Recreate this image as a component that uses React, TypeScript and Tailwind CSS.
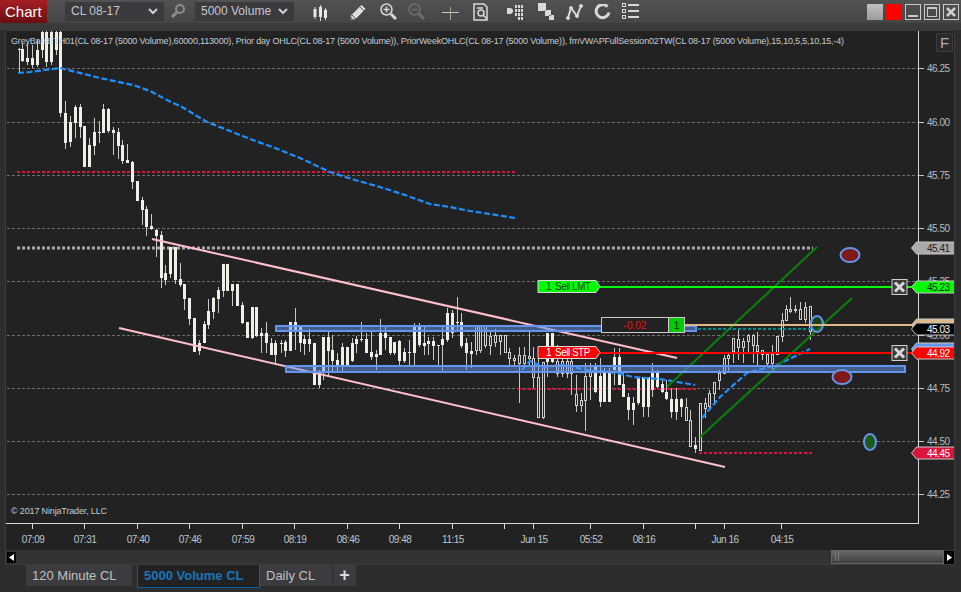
import React from 'react';

// candle rows: [x, wickTop, bodyTop, bodyBottom, wickBottom, hollow], measured at 3x, see toPx
type Row = number[];

const topLeft: Row[] = [
  [56, 145, 148, 150, 220], [67, 130, 148, 182, 185], [82, 130, 175, 187, 195], [97, 135, 175, 195, 205],
  [112, 120, 150, 195, 200], [125, 93, 95, 150, 175], [139, 93, 95, 185, 200], [154, 93, 95, 185, 195],
  [168, 93, 95, 150, 165], [181, 93, 95, 339, 351],
];

const slide: Row[] = [
  [196, 183, 220, 310, 328], [211, 228, 247, 305, 320], [226, 195, 200, 248, 293], [241, 193, 202, 260, 293],
  [253, 257, 257, 380, 380], [268, 295, 316, 380, 380], [283, 235, 277, 317, 345], [298, 243, 277, 278, 310],
  [310, 193, 207, 278, 278], [325, 205, 207, 272, 280], [340, 262, 270, 278, 345], [355, 265, 277, 317, 357],
  [367, 300, 316, 362, 373], [382, 312, 361, 368, 368], [397, 363, 366, 425, 447], [412, 423, 423, 482, 482],
  [427, 472, 481, 509, 555], [439, 498, 508, 560, 587], [454, 522, 559, 566, 570], [469, 568, 570, 587, 650],
  [484, 573, 585, 713, 745], [496, 675, 700, 720, 735], [511, 620, 622, 702, 713], [526, 620, 622, 720, 733],
  [541, 670, 717, 735, 740], [553, 733, 733, 776, 810], [568, 775, 775, 836, 855], [583, 835, 835, 937, 937],
  [598, 900, 910, 932, 945], [613, 843, 852, 910, 910], [625, 778, 813, 855, 867], [640, 770, 773, 815, 837],
  [655, 740, 750, 776, 820], [670, 672, 672, 752, 770], [682, 672, 672, 752, 752], [697, 732, 732, 752, 798],
  [712, 732, 732, 798, 798],
];

const middle: Row[] = [
  [7, 37, 45, 98, 103], [22, 97, 97, 145, 145], [35, 52, 52, 145, 148], [49, 52, 52, 137, 140],
  [64, 115, 128, 137, 190], [79, 95, 128, 160, 190], [92, 145, 160, 195, 195], [106, 150, 160, 195, 220],
  [122, 150, 160, 161, 190], [136, 150, 157, 182, 200], [149, 95, 95, 182, 182], [164, 55, 95, 120, 180],
  [179, 110, 110, 160, 185], [193, 135, 147, 162, 195], [208, 118, 148, 162, 185], [221, 160, 160, 285, 285],
  [236, 240, 250, 285, 295], [250, 140, 140, 245, 270], [265, 125, 140, 182, 260], [277, 135, 180, 212, 245],
  [292, 190, 210, 225, 250], [307, 160, 170, 228, 250], [322, 170, 170, 225, 228], [335, 145, 160, 212, 215],
  [349, 138, 148, 162, 190], [364, 95, 148, 151, 155], [379, 130, 148, 188, 188], [394, 125, 186, 200, 210],
  [407, 180, 192, 200, 240], [421, 88, 128, 195, 195], [436, 110, 130, 143, 180], [451, 140, 142, 188, 195],
  [463, 155, 155, 188, 195], [478, 150, 153, 212, 225], [493, 175, 187, 212, 220], [508, 150, 187, 188, 225],
  [523, 100, 110, 188, 225], [536, 100, 110, 165, 170], [551, 110, 160, 168, 195], [565, 140, 153, 162, 195],
  [580, 140, 153, 168, 210], [593, 165, 165, 166, 225], [607, 110, 148, 165, 245], [622, 55, 70, 150, 155],
  [637, 60, 70, 130, 145], [650, 22, 97, 100, 120], [664, 70, 97, 168, 175], [679, 145, 160, 188, 240],
  [694, 155, 182, 193, 235], [709, 110, 110, 180, 195, 1], [721, 110, 110, 182, 190, 1], [736, 110, 110, 167, 175, 1],
  [751, 125, 140, 165, 195, 1], [766, 118, 135, 157, 170, 1], [779, 135, 135, 155, 195, 1], [794, 135, 135, 188, 190, 1],
  [808, 175, 187, 205, 225, 1], [823, 195, 205, 212, 225, 1], [836, 170, 197, 220, 340, 1], [851, 170, 197, 220, 230, 1],
  [866, 125, 200, 206, 225, 1], [880, 170, 205, 262, 295, 1],
];

const right: Row[] = [
  [55, 380, 442, 562, 565, 1], [68, 397, 397, 562, 568, 1], [82, 310, 310, 397, 440], [97, 310, 310, 395, 400],
  [112, 345, 395, 430, 440, 1], [127, 355, 395, 430, 440, 1], [140, 370, 395, 430, 445, 1], [154, 375, 395, 430, 495, 1],
  [168, 435, 492, 525, 545, 1], [182, 490, 510, 527, 545, 1], [196, 400, 440, 510, 602, 1], [210, 400, 428, 440, 510, 1],
  [225, 400, 412, 487, 490], [240, 385, 437, 515, 532], [253, 415, 428, 515, 515], [268, 415, 428, 515, 515],
  [283, 355, 380, 420, 465], [297, 355, 380, 465, 465], [310, 430, 462, 500, 500], [325, 490, 500, 540, 570],
  [340, 500, 518, 540, 585], [355, 440, 440, 520, 525], [370, 440, 440, 530, 560], [383, 440, 440, 532, 560],
  [397, 400, 428, 480, 500], [412, 420, 428, 470, 475], [427, 450, 462, 487, 490], [439, 450, 487, 508, 510],
  [454, 475, 508, 545, 565], [469, 475, 508, 545, 570], [484, 505, 508, 532, 560], [497, 505, 532, 572, 572, 1],
  [511, 540, 572, 648, 648, 1], [525, 620, 645, 658, 668], [540, 520, 520, 662, 662, 1], [555, 505, 520, 535, 565, 1],
  [568, 480, 490, 530, 535, 1], [583, 455, 458, 490, 525, 1], [597, 420, 430, 450, 480, 1], [611, 375, 385, 430, 430, 1],
  [625, 365, 375, 385, 425, 1], [640, 325, 325, 365, 400, 1], [655, 300, 328, 352, 390, 1], [669, 325, 335, 352, 400, 1],
  [685, 312, 316, 335, 370, 1], [698, 312, 316, 345, 400, 1], [712, 305, 345, 365, 405, 1], [726, 360, 362, 373, 390, 1],
  [741, 365, 373, 400, 410, 1], [755, 345, 372, 400, 420, 1], [770, 320, 318, 372, 375, 1], [785, 250, 270, 320, 335, 1],
  [799, 225, 237, 272, 272, 1], [811, 200, 237, 245, 250, 1], [826, 225, 237, 238, 250, 1], [840, 215, 237, 268, 270, 1],
  [855, 215, 232, 268, 280, 1], [871, 228, 230, 305, 330, 1],
];

const toPx = (rows: Row[], x0: number, y0: number) =>
  rows.map((r) => ({
    x: Math.round(x0 + r[0] / 3),
    wt: Math.max(31, y0 + r[1] / 3),
    bt: Math.max(31, y0 + r[2] / 3),
    bb: y0 + r[3] / 3,
    wb: y0 + r[4] / 3,
    hollow: r[5] === 1,
  }));

const candles = [
  ...toPx(topLeft, 0, 0),
  ...toPx(slide, 0, 40),
  ...toPx(middle, 240, 290),
  ...toPx(right, 520, 230),
];

const gridLines = [
  { y: 68, label: '46.25' },
  { y: 122, label: '46.00' },
  { y: 175, label: '45.75' },
  { y: 228, label: '45.50' },
  { y: 281, label: '45.25' },
  { y: 335, label: '45.00' },
  { y: 388, label: '44.75' },
  { y: 441, label: '44.50' },
  { y: 494, label: '44.25' },
];

const timeTicks: [number, string][] = [
  [32, '07:09'], [84, '07:31'], [137, '07:40'], [189, '07:46'], [242, '07:59'], [294, '08:19'], [347, '08:46'],
  [399, '09:48'], [452, '11:15'], [504, ''], [533, 'Jun 15'], [590, '05:52'], [643, '08:16'], [695, ''],
  [724, 'Jun 16'], [781, '04:15'],
];

const priceTags = [
  { y: 248, text: '45.41', fill: '#a9a9a9', color: '#222222' },
  { y: 287, text: '45.23', fill: '#00ff00', color: '#222222' },
  { y: 325, text: '', fill: '#deb887', color: '#222222' },
  { y: 329, text: '45.03', fill: '#000000', color: '#ffffff' },
  { y: 349, text: '', fill: '#6495ed', color: '#ffffff' },
  { y: 353, text: '44.92', fill: '#ff0000', color: '#ffffff' },
  { y: 453, text: '44.45', fill: '#dc143c', color: '#ffffff' },
];

const CloseBox = ({ y }: { y: number }) => (
  <g>
    <rect x={892} y={y} width={15} height={15} fill="#3c3c3c" stroke="#d0d0d0" />
    <path d={`M895 ${y + 3}L904 ${y + 12}M904 ${y + 3}L895 ${y + 12}`} stroke="#d8d8d8" strokeWidth={3} />
  </g>
);

const Flag = ({ y, fill, color, qty, label }: { y: number; fill: string; color: string; qty: string; label: string }) => (
  <g>
    <polygon
      points={`538,${y - 6} 596,${y - 6} 600,${y} 596,${y + 6} 538,${y + 6}`}
      fill={fill}
      stroke="#d8d8d8"
    />
    <text y={y + 3.5} fontSize={10} letterSpacing={-0.5} fill={color}>
      <tspan x={546}>{qty}</tspan>
      <tspan x={555}>{label}</tspan>
    </text>
  </g>
);

const Chart = () => (
  <svg width={948} height={519} viewBox="6 31 948 519" className="block" fontFamily="'Liberation Sans', Arial, sans-serif">
    {gridLines.map((g) => (
      <g key={g.y}>
        <line x1={7} x2={919} y1={g.y + 0.5} y2={g.y + 0.5} stroke="#6e6e6e" strokeDasharray="3 2" />
        <line x1={919} x2={924} y1={g.y + 0.5} y2={g.y + 0.5} stroke="#c8c8c8" />
        <text x={927} y={g.y + 4} fontSize={10} letterSpacing={-0.5} fill="#b8bcc0">{g.label}</text>
      </g>
    ))}

    <line x1={17} x2={516} y1={172} y2={172} stroke="#dc143c" strokeWidth={2} strokeDasharray="3 2" />
    <line x1={518} x2={697} y1={389} y2={389} stroke="#dc143c" strokeWidth={2} strokeDasharray="3 2" />
    <line x1={699} x2={812} y1={453} y2={453} stroke="#dc143c" strokeWidth={2} strokeDasharray="3 2" />
    <line x1={17} x2={813} y1={248} y2={248} stroke="#a8a8a8" strokeWidth={3} strokeDasharray="3 2" />

    {candles.map((c, i) => (
      <g key={i} shapeRendering="crispEdges">
        <line x1={c.x + 0.5} x2={c.x + 0.5} y1={c.wt} y2={c.wb} stroke="#c8c8c8" />
        {c.hollow ? (
          <rect
            x={c.x - 0.5}
            y={c.bt}
            width={2}
            height={Math.max(1, c.bb - c.bt)}
            fill="#222222"
            stroke="#d0d0d0"
            strokeWidth={1}
          />
        ) : (
          <rect x={c.x - 1} y={c.bt} width={3} height={Math.max(1, c.bb - c.bt)} fill="#efefe8" />
        )}
      </g>
    ))}

    <polyline
      points="18,73 30,72 60,68 100,78 133,85 150,91 167,100 182,107 207,122 225,129 250,139 275,148 300,158 330,172 355,180 380,187 405,195 430,204 450,207 470,211 490,214 515,218"
      fill="none"
      stroke="#1e90ff"
      strokeWidth={2.200}
      strokeDasharray="6 2.500"
    />
    <polyline
      points="522,370 530,361 543,367 563,365 587,370 617,373 633,377 660,379 695,385"
      fill="none"
      stroke="#1e90ff"
      strokeWidth={2.200}
      strokeDasharray="6 2.500"
    />
    <polyline
      points="702,418 720,397 747,373 777,365 810,349"
      fill="none"
      stroke="#1e90ff"
      strokeWidth={2.200}
      strokeDasharray="6 2.500"
    />

    <line x1={152} y1={239} x2={677} y2={358} stroke="#ffc0cb" strokeWidth={2} />
    <line x1={119} y1={328} x2={725} y2={467} stroke="#ffc0cb" strokeWidth={2} />
    <line x1={667} y1={387} x2={817} y2={247} stroke="#0c800c" strokeWidth={2} />
    <line x1={700} y1={437} x2={852} y2={298} stroke="#0c800c" strokeWidth={2} />

    <rect x={276} y={326} width={420} height={5} fill="#6495ed" fillOpacity={0.5} stroke="#6495ed" strokeWidth={2} />
    <rect x={286} y={366} width={619} height={6} fill="#6495ed" fillOpacity={0.5} stroke="#6495ed" strokeWidth={2} />

    <ellipse cx={850} cy={255} rx={9.5} ry={7} fill="#7f1a1a" stroke="#6495ed" strokeWidth={2} />
    <ellipse cx={842} cy={377} rx={9.5} ry={7} fill="#7f1a1a" stroke="#6495ed" strokeWidth={2} />
    <ellipse cx={870} cy={442} rx={6} ry={8} fill="#1a5a1a" stroke="#6495ed" strokeWidth={2} />
    <ellipse cx={817} cy={324} rx={6} ry={8} fill="#1a5a1a" fillOpacity={0.5} stroke="#6495ed" strokeWidth={2} />

    <line x1={600} x2={892} y1={287} y2={287} stroke="#00ff00" strokeWidth={2} />
    <line x1={600} x2={892} y1={353} y2={353} stroke="#ff0000" strokeWidth={2} />
    <line x1={685} x2={912} y1={325} y2={325} stroke="#deb887" strokeWidth={2} />
    <line x1={698} x2={812} y1={329} y2={329} stroke="#008b8b" strokeWidth={2} strokeDasharray="3 2" />
    <line x1={907} x2={912} y1={287} y2={287} stroke="#00ff00" strokeWidth={2} />
    <line x1={907} x2={912} y1={353} y2={353} stroke="#ff0000" strokeWidth={2} />

    <Flag y={286.5} fill="#00ff00" color="#1e3a1e" qty="1" label="Sell LMT" />
    <Flag y={352.5} fill="#ff0000" color="#ffffff" qty="1" label="Sell STP" />
    <CloseBox y={279.5} />
    <CloseBox y={345.5} />

    <rect x={601.5} y={317.5} width={67} height={15} fill="#222222" stroke="#cccccc" />
    <text x={635} y={328.5} fontSize={10} fill="#e81010" textAnchor="middle">-0.02</text>
    <rect x={668.5} y={317.5} width={16} height={15} fill="#00cc00" stroke="#cccccc" />
    <text x={676.5} y={328.5} fontSize={10} fill="#1a1a1a" textAnchor="middle">1</text>

    <line x1={918.5} x2={918.5} y1={30} y2={523} stroke="#d8d8d8" />
    <line x1={6} x2={919} y1={523.5} y2={523.5} stroke="#d8d8d8" />

    {priceTags.map((t, i) => (
      <g key={i}>
        <polygon
          points={`911.5,${t.y} 916.5,${t.y - 6} 955,${t.y - 6} 955,${t.y + 6} 916.5,${t.y + 6}`}
          fill={t.fill}
          stroke="#c8c8c8"
        />
        <text x={927} y={t.y + 4} fontSize={10} letterSpacing={-0.5} fill={t.color}>{t.text}</text>
      </g>
    ))}

    {timeTicks.map(([x, label]) => (
      <g key={x}>
        <line x1={x + 0.5} x2={x + 0.5} y1={523} y2={529} stroke="#d8d8d8" />
        <text x={x + 1} y={543} fontSize={10} letterSpacing={-0.5} fill="#bcc4cc" textAnchor="middle">{label}</text>
      </g>
    ))}
  </svg>
);

const Chevron = () => (
  <svg viewBox="0 0 10 7" width={10} height={7}>
    <path d="M1 1l4 4 4-4" fill="none" stroke="#d0d0d0" strokeWidth={2} />
  </svg>
);

const ScrollArrow = ({ flip }: { flip?: boolean }) => (
  <svg viewBox="0 0 5 7" width={5} height={7} className={flip ? 'rotate-180' : ''}>
    <path d="M5 0v7L0 3.500z" fill="#ffffff" />
  </svg>
);

const Toolbar = () => (
  <>
    <svg viewBox="0 0 15 16" width={15} height={16} className="ml-[19px] mt-[5px]" stroke="#d8d8d8">
      <path d="M2 2v12M7.500 0v16M12.500 3v12" strokeWidth={1} />
      <path d="M2 4v8M7.500 2v10M12.500 5v8" strokeWidth={3} stroke="#e8e8e8" />
    </svg>
    <svg viewBox="0 0 18 17" width={18} height={17} className="ml-[21px] mt-[4px]" fill="none">
      <path d="M1 16l1.500-5L12.500 1l4 4L6.500 15z" fill="#e0e0e0" />
      <path d="M3 11l4 4M11 3l4 4" stroke="#505050" strokeWidth={1} />
      <path d="M1 16l1-3 2 2z" fill="#505050" />
    </svg>
    <svg viewBox="0 0 17 17" width={17} height={17} className="ml-[13px] mt-[3px]" fill="none" stroke="#d8d8d8">
      <circle cx="6.500" cy="6.500" r="5.500" strokeWidth={1.500} />
      <path d="M3.500 6.500h6M6.500 3.500v6" strokeWidth={1.500} />
      <path d="M11 11l5 5" strokeWidth={3} />
    </svg>
    <svg viewBox="0 0 17 17" width={17} height={17} className="ml-[11px] mt-[3px]" fill="none" stroke="#6e6e6e">
      <circle cx="6.500" cy="6.500" r="5.500" strokeWidth={1.500} />
      <path d="M3.500 6.500h6" strokeWidth={1.500} />
      <path d="M11 11l5 5" strokeWidth={3} />
    </svg>
    <svg viewBox="0 0 17 13" width={17} height={13} className="ml-[17px] mt-[7px]" fill="none">
      <path d="M0 5.500h17" stroke="#c8ccd0" />
      <path d="M8.500 0v13" stroke="#b0a090" />
    </svg>
    <svg viewBox="0 0 18 18" width={18} height={18} className="ml-[13px] mt-[3px]" fill="none" stroke="#d8d8d8">
      <path d="M2 1h10l3 3v13H2z" strokeWidth={1.500} />
      <circle cx="9" cy="10" r="3" strokeWidth={1.500} />
      <path d="M11 12l4 4M5 5h6" strokeWidth={1.500} />
    </svg>
    <svg viewBox="0 0 17 15" width={17} height={15} className="ml-[17px] mt-[5px]" fill="#d8d8d8">
      <path d="M0 3h4l2 2v2L4 9H0zM8 0h2v3H8zM11 0h2v3h-2zM14 0h2v3h-2zM8 4h2v3H8zM11 4h2v3h-2zM14 4h2v3h-2zM8 8h2v3H8zM11 8h2v3h-2zM14 8h2v3h-2zM11 12h2v3h-2zM14 12h2v3h-2z" />
    </svg>
    <svg viewBox="0 0 17 17" width={17} height={17} className="ml-[14px] mt-[3px]" fill="#d8d8d8">
      <path d="M0 0h8v8H0zM7 7h6v6H7zM11 12h5v5h-5z" />
      <path d="M7 7h1v1H7zM11 12h2v1h-2z" fill="#6e6e6e" />
    </svg>
    <svg viewBox="0 0 17 16" width={17} height={16} className="ml-[11px] mt-[4px]" fill="#d8d8d8" stroke="#d8d8d8">
      <path d="M2 14l3-10 6 8 4-10" fill="none" strokeWidth={2} />
      <circle cx="2" cy="14" r="1.500" strokeWidth={1} />
      <circle cx="5" cy="4" r="1.500" strokeWidth={1} />
      <circle cx="11" cy="12" r="1.500" strokeWidth={1} />
      <circle cx="15" cy="2" r="1.500" strokeWidth={1} />
    </svg>
    <svg viewBox="0 0 17 16" width={17} height={16} className="ml-[11px] mt-[4px]" fill="none" stroke="#d8d8d8">
      <path d="M13.500 2.800A6.500 6.500 0 1 0 15 8.500" strokeWidth={3} />
    </svg>
    <svg viewBox="0 0 17 17" width={17} height={17} className="ml-[11px] mt-[3px]">
      <g fill="none" stroke="#d8d8d8">
        <rect x="0.500" y="0.500" width="3" height="3" />
        <rect x="0.500" y="6.500" width="3" height="3" />
        <rect x="0.500" y="12.500" width="3" height="3" />
      </g>
      <path d="M6 2h11M6 8h11M6 14h11" stroke="#d8d8d8" strokeWidth={2} />
    </svg>
  </>
);

export default function App() {
  return (
    <div className="w-[961px] h-[592px] bg-[#2d2d2e] flex flex-col overflow-hidden font-['Liberation_Sans',Arial,sans-serif]">
      <div className="h-[30px] shrink-0 bg-[#3a3a3b]">
        <div className="h-[23px] bg-gradient-to-b from-[#525252] to-[#454545] flex items-start">
          <div className="w-[47px] h-[23px] bg-gradient-to-b from-[#a51e22] to-[#6c0e12] text-white text-[15px] leading-[23px] pl-[5px]">
            Chart
          </div>
          <div className="ml-[18px] mt-[2px] w-[99px] h-[19px] bg-[#3a3a3f] text-[#c8c8c8] text-[12px] leading-[19px] pl-[6px] pr-[6px] flex items-center justify-between">
            CL 08-17
            <Chevron />
          </div>
          <svg viewBox="0 0 16 16" width={16} height={16} className="ml-[6px] mt-[3px]" fill="none" stroke="#8c8c8c">
            <circle cx="10" cy="6" r="4" strokeWidth={2} />
            <path d="M7 9l-5 5" strokeWidth={3} />
          </svg>
          <div className="ml-[9px] mt-[2px] w-[99px] h-[19px] bg-[#3a3a3f] text-[#c8c8c8] text-[12px] leading-[19px] pl-[6px] pr-[6px] flex items-center justify-between">
            5000 Volume
            <Chevron />
          </div>

          <Toolbar />

          <div className="ml-auto mt-[4px] mr-[2px] flex gap-[3px]">
            <div className="w-[16px] h-[16px] bg-gradient-to-b from-[#c0c0c0] to-[#9c9c9c]" />
            <div className="w-[16px] h-[16px] bg-[#ff0000]" />
            <div className="w-[16px] h-[16px] border border-[#c8c8c8] flex items-end justify-center pb-[2px]">
              <div className="w-[10px] h-[2px] bg-[#c8c8c8]" />
            </div>
            <div className="w-[16px] h-[16px] border border-[#c8c8c8] flex items-center justify-center">
              <div className="w-[10px] h-[10px] border border-t-2 border-[#c8c8c8]" />
            </div>
            <div className="w-[16px] h-[16px] border border-[#c8c8c8] flex items-center justify-center">
              <svg viewBox="0 0 10 10" width={10} height={10}>
                <path d="M1 1l8 8M9 1l-8 8" stroke="#d0d0d0" strokeWidth={2.500} />
              </svg>
            </div>
          </div>
        </div>
      </div>

      <div className="ml-[5px] mr-[6px] h-[535px] shrink-0 bg-[#222222] relative flex flex-col border border-[#3c3c3c]">
        <Chart />
        <div className="absolute left-[5px] top-[4px] text-[9px] tracking-[-0.18px] leading-[12px] text-[#c4ccd4] whitespace-nowrap">
          GreyBarsETH01(CL 08-17 (5000 Volume),60000,113000), Prior day OHLC(CL 08-17 (5000 Volume)), PriorWeekOHLC(CL 08-17 (5000 Volume)), fmVWAPFullSession02TW(CL 08-17 (5000 Volume),15,10,5,5,10,15,-4)
        </div>
        <div className="absolute left-[5px] top-[474px] text-[9px] tracking-[-0.15px] leading-[12px] text-[#c4ccd4]">© 2017 NinjaTrader, LLC</div>
        <div className="absolute right-[1px] top-[2px] w-[17px] h-[19px] bg-[#2a2a2c] border border-[#3c3c3c] text-[#b0b0b0] text-[15px] leading-[17px] text-center">
          F
        </div>
        <div className="h-[14px] bg-[#333333] flex items-center pl-[1px]">
          <div className="w-[9px] h-[11px] bg-black flex items-center justify-center">
            <ScrollArrow />
          </div>
          <div className="ml-auto w-[113px] h-[14px] border border-[#666666] bg-gradient-to-b from-[#6a6a6a] to-[#3e3e3e] flex items-center pl-[3px] gap-[2px]">
            <div className="w-[1px] h-[8px] bg-[#7a7a7a]" />
            <div className="w-[1px] h-[8px] bg-[#7a7a7a]" />
          </div>
          <div className="w-[10px] h-[13px] bg-black flex items-center justify-center">
            <ScrollArrow flip />
          </div>
        </div>
      </div>

      <div className="flex pl-[26px] items-start">
        <div className="w-[106px] h-[21px] bg-[#3c3c40] text-[#c0c0c0] text-[13px] leading-[21px] pl-[6px]">120 Minute CL</div>
        <div className="ml-[5px] w-[123px] h-[23px] bg-[#222222] border border-t-0 border-[#0a5fa8] text-[#1c75bc] text-[13px] font-bold leading-[21px] pl-[6px]">
          5000 Volume CL
        </div>
        <div className="w-[72px] h-[21px] bg-[#3c3c40] text-[#c0c0c0] text-[13px] leading-[21px] pl-[6px]">Daily CL</div>
        <div className="ml-[1px] w-[23px] h-[21px] bg-[#3c3c40] text-[#d8d8d8] text-[18px] font-bold leading-[20px] text-center">+</div>
      </div>
    </div>
  );
}
